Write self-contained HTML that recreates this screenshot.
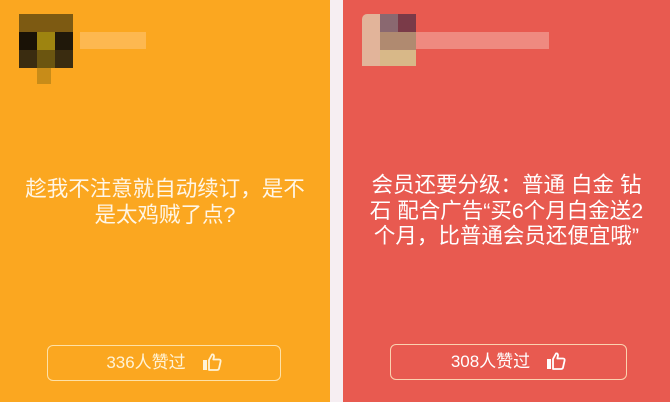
<!DOCTYPE html>
<html><head><meta charset="utf-8"><style>
body{margin:0;width:670px;height:402px;overflow:hidden;background:#f6eef2;position:relative;font-family:"Liberation Sans","Noto Sans CJK SC",sans-serif}
.p{position:absolute;top:0;height:402px}
.l{left:0;width:330px;background:#fba720}
.r{left:343px;width:327px;background:#e85a50}
.t{position:absolute;left:-10px;right:-10px;text-align:center;font-size:21.5px;line-height:25.5px;color:#fff}
.b{position:absolute;border:1.5px solid rgba(255,240,200,.8);border-radius:6px;height:34px;line-height:34px;text-align:center;font-size:17px;color:#fff3d6}
.b svg{vertical-align:-3px;margin-left:16px}
.px{position:absolute}
</style></head><body>
<div class="p l">
  <div class="px" style="left:19px;top:14px;width:54px;height:18px;background:#7d5a12"></div>
  <div class="px" style="left:19px;top:32px;width:18px;height:18px;background:#1a1206"></div>
  <div class="px" style="left:37px;top:32px;width:18px;height:18px;background:#9e8410"></div>
  <div class="px" style="left:55px;top:32px;width:18px;height:18px;background:#20180a"></div>
  <div class="px" style="left:19px;top:50px;width:54px;height:18px;background:#3a2c10"></div>
  <div class="px" style="left:37px;top:50px;width:18px;height:18px;background:#6b5510"></div>
  <div class="px" style="left:37px;top:68px;width:14px;height:16px;background:#c88c18"></div>
  <div class="px" style="left:80px;top:32px;width:66px;height:17px;background:#fdb850"></div>
  <div class="t" style="top:177px;color:#fff6e6">趁我不注意就自动续订，是不<br>是太鸡贼了点?</div>
  <div class="b" style="left:47px;top:345px;width:232px">336人赞过<svg width="20" height="18" viewBox="0 0 20 18"><rect x="1" y="7" width="4" height="10" fill="#fff3d6"/><path d="M7 7 L10 1.5 Q12 1 12 3.5 L11.3 6.5 H17 Q19 6.5 18.6 8.5 L17 15.5 Q16.6 17 15 17 H7 Z" fill="none" stroke="#fff3d6" stroke-width="1.8" stroke-linejoin="round"/></svg></div>
</div>
<div class="p r">
  <div class="px" style="left:19px;top:14px;width:54px;height:52px;background:#e2b49a;border-radius:5px 0 0 0"></div>
  <div class="px" style="left:37px;top:14px;width:18px;height:18px;background:#8a6870"></div>
  <div class="px" style="left:55px;top:14px;width:18px;height:18px;background:#7a3a48"></div>
  <div class="px" style="left:37px;top:32px;width:36px;height:18px;background:#b08a70"></div>
  <div class="px" style="left:37px;top:50px;width:36px;height:16px;background:#d8b888"></div>
  <div class="px" style="left:73px;top:32px;width:133px;height:17px;background:#ef8a80"></div>
  <div class="t" style="top:173px">会员还要分级：普通 白金 钻<br>石 配合广告“买6个月白金送2<br>个月，比普通会员还便宜哦”</div>
  <div class="b" style="left:47px;top:344px;width:235px;color:#fff">308人赞过<svg width="20" height="18" viewBox="0 0 20 18"><rect x="1" y="7" width="4" height="10" fill="#fff"/><path d="M7 7 L10 1.5 Q12 1 12 3.5 L11.3 6.5 H17 Q19 6.5 18.6 8.5 L17 15.5 Q16.6 17 15 17 H7 Z" fill="none" stroke="#fff" stroke-width="1.8" stroke-linejoin="round"/></svg></div>
</div>
</body></html>
